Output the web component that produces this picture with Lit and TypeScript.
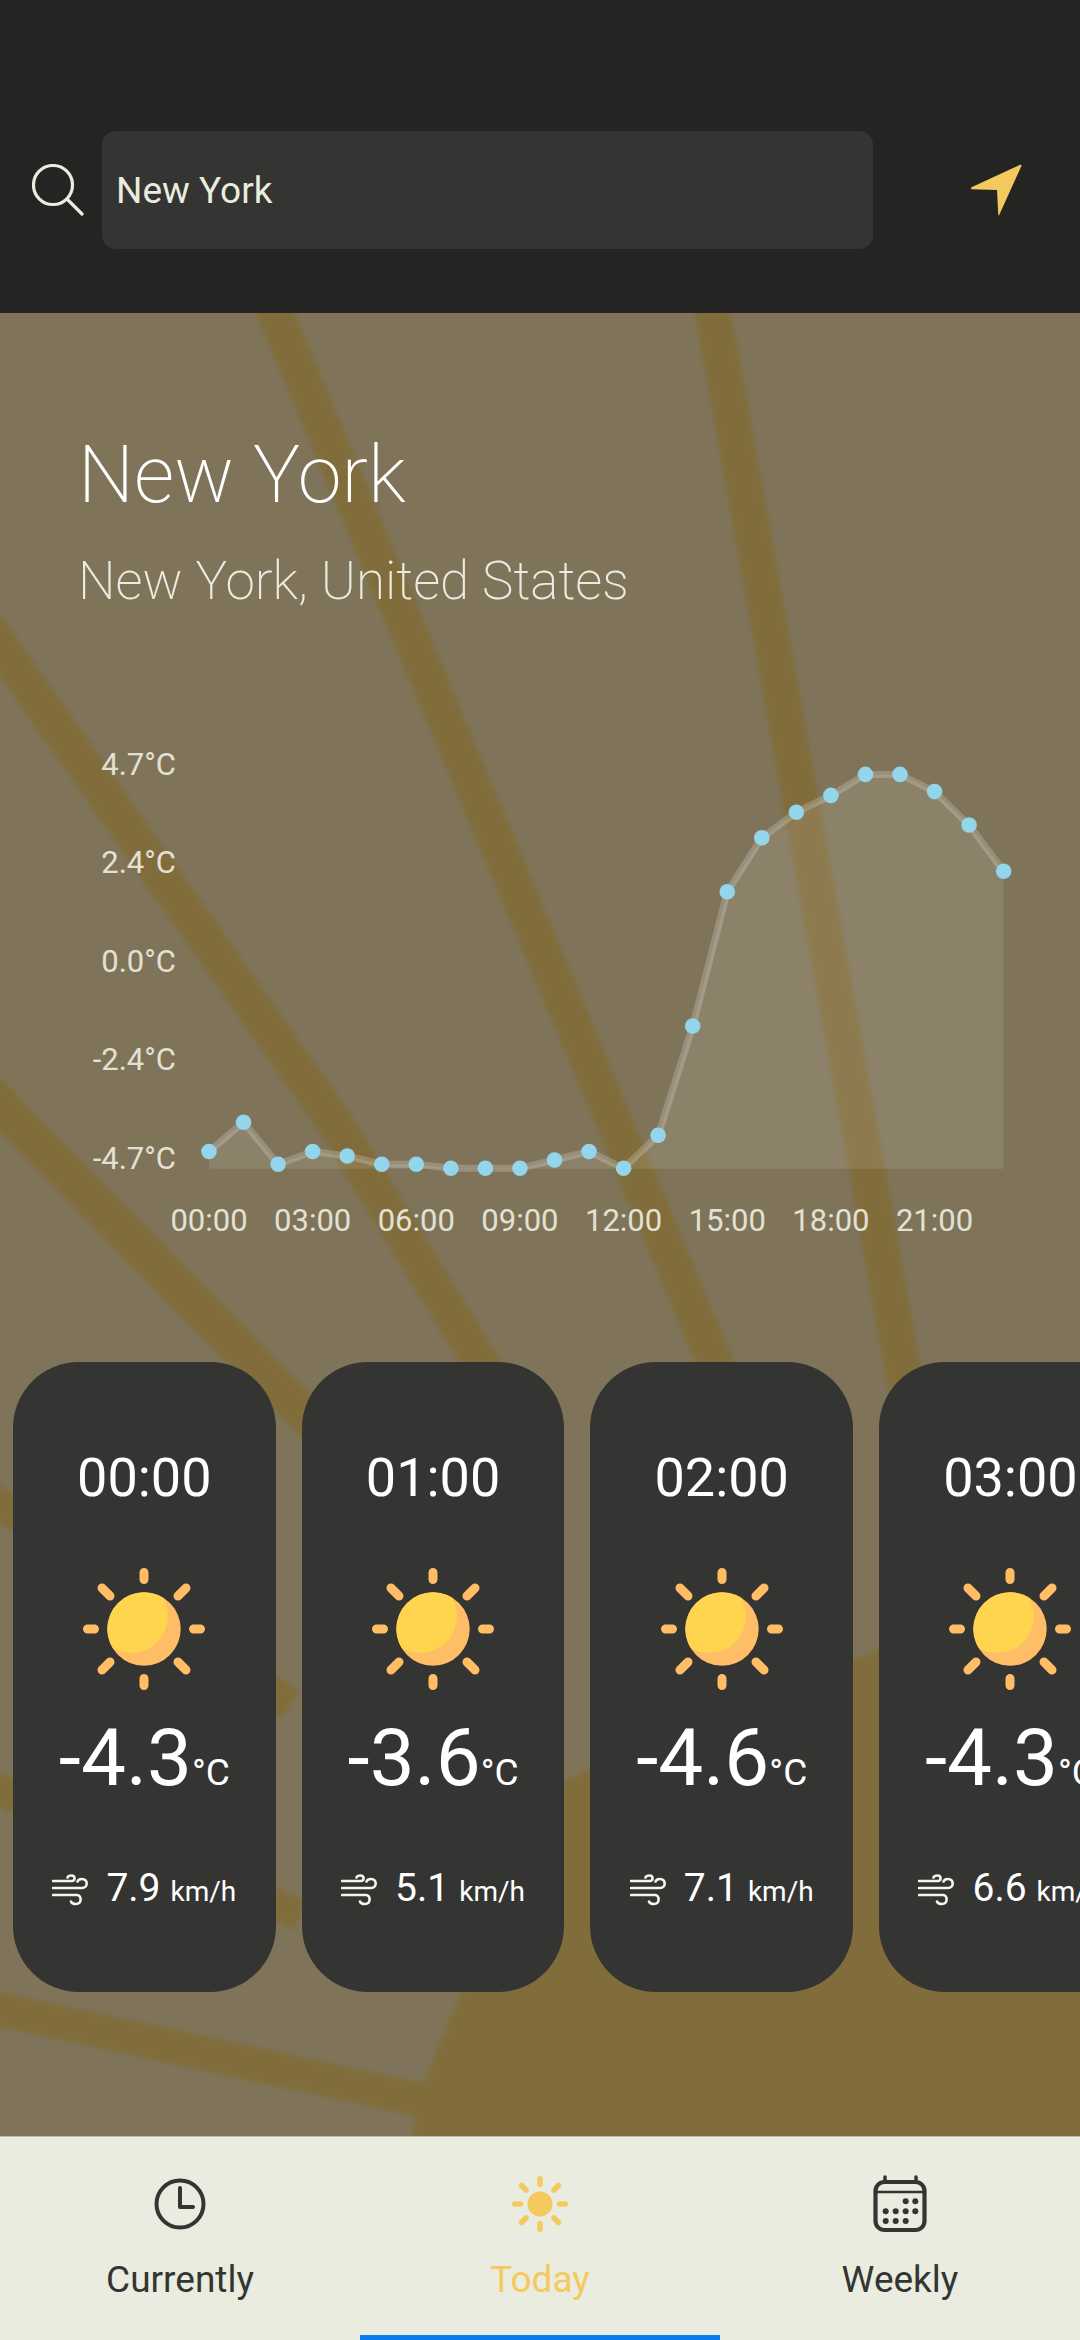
import { LitElement, html, css, svg } from "lit";
import { customElement } from "lit/decorators.js";

const ys = [1151.5,1122.2,1164.2,1151.5,1156,1164.2,1164.2,1168.3,1168.3,1168.3,1160,1151.5,1168.3,1135.3,1026,891.8,837.8,812.3,795.4,774.4,774.4,791.6,825,871.2];
const X0 = 209, STEP = 34.55, BASE = 1168.7;
const pts = ys.map((y, i) => [X0 + i * STEP, y] as const);
const line = pts.map(p => p.join(",")).join(" ");
const area = `${X0},${BASE} ${line} ${pts[23][0]},${BASE}`;
const yLabels: [string, number][] = [["4.7°C",774.7],["2.4°C",873.2],["0.0°C",971.7],["-2.4°C",1069.7],["-4.7°C",1168.7]];
const xLabels = ["00:00","03:00","06:00","09:00","12:00","15:00","18:00","21:00"];
const hours = [
  { t: "00:00", temp: "-4.3", wind: "7.9" },
  { t: "01:00", temp: "-3.6", wind: "5.1" },
  { t: "02:00", temp: "-4.6", wind: "7.1" },
  { t: "03:00", temp: "-4.3", wind: "6.6" },
];

const sun = () => html`<svg class="sun" viewBox="-65 -65 130 130" aria-hidden="true">
  <defs><clipPath id="sunclip"><circle r="36.7"/></clipPath></defs>
  <g stroke="#ffbd66" stroke-width="9" stroke-linecap="round">
    <path d="M0-56.5V-49.5M0 56.5V49.5M-56.5 0H-49.5M56.5 0H49.5M-42-41-34-33M42-41 34-33M-42 41-34 33M42 41 34 33"/>
  </g>
  <circle r="36.7" fill="#ffbd66"/>
  <circle cx="-13" cy="-13" r="37" fill="#ffd54f" clip-path="url(#sunclip)"/>
</svg>`;

const wind = () => html`<svg class="wind" viewBox="0 0 36 32" aria-hidden="true">
  <path d="M1 7H20C23.5 7 23.5 1.5 19.5 1.5C17.5 1.5 16 2.2 15.5 3.5M1 14H30C36 14 36.5 5 30 5C27.5 5 26 6 25.5 7.5M1 21H25C30 21 30 30 24 30C21 30 19.5 29 19 27.5" fill="none" stroke="#f4f5ef" stroke-width="2.6" stroke-linecap="round"/>
</svg>`;

@customElement("app-root")
export class AppRoot extends LitElement {
  static styles = css`
    :host { display: flex; flex-direction: column; width: 1080px; height: 2340px; overflow: hidden; font-family: Roboto, "Liberation Sans", sans-serif; background: #242422; }
    .head { height: 313px; flex: none; display: flex; align-items: flex-start; box-sizing: border-box; padding: 131px 59px 0 32px; background: #242422; }
    .head svg.search { width: 52px; height: 52px; flex: none; margin-right: 18px; margin-top: 33px; }
    .field { flex: none; width: 771px; height: 118px; box-sizing: border-box; background: #343532; border-radius: 14px; display: flex; align-items: center; padding: 0 14px; color: #e9ecdf; font-size: 37px; }
    .head svg.loc { width: 52px; height: 52px; flex: none; margin-left: 97px; margin-top: 33px; }
    main { flex: 1; position: relative; overflow: hidden; background: #7f745a; display: flex; flex-direction: column; }
    .map { position: absolute; inset: 0; width: 100%; height: 100%; }
    .content { position: relative; display: flex; flex-direction: column; padding-top: 115px; }
    .city { margin: 0 0 0 78px; font-size: 79px; line-height: 94px; font-weight: 200; color: #fff; }
    .region { margin: 27px 0 0 78px; font-size: 53px; line-height: 64px; font-weight: 200; color: #ebebe2; }
    .chart { display: block; width: 1080px; height: 560px; margin-top: 107px; }
    .chart text { font-size: 31px; fill: #e3e1d4; font-family: Roboto, "Liberation Sans", sans-serif; }
    .cards { display: flex; gap: 26px; margin-top: 82px; padding-left: 13px; }
    .card { flex: none; width: 262.7px; height: 630px; box-sizing: border-box; padding-top: 86px; border-radius: 66px; background: #343432; color: #fff; display: flex; flex-direction: column; align-items: center; }
    .time { font-size: 54px; line-height: 60px; }
    .sun { width: 130px; height: 130px; margin-top: 56px; flex: none; }
    .temp { margin-top: 19px; font-size: 80px; line-height: 90px; white-space: nowrap; }
    .temp small { font-size: 37px; }
    .windrow { margin-top: 48px; display: flex; align-items: baseline; font-size: 39px; line-height: 44px; white-space: nowrap; }
    .wind { width: 36px; height: 32px; align-self: center; margin-right: 18px; flex: none; }
    .windrow small { font-size: 28px; margin-left: 10px; }
    nav { height: 204px; flex: none; position: relative; box-sizing: border-box; border-top: 1px solid #bdbca9; background: #e9ecdf; display: flex; }
    .tab { flex: 1; display: flex; flex-direction: column; align-items: center; padding-top: 35px; color: #333532; font-size: 37px; line-height: 42px; }
    .tab svg { width: 64px; height: 64px; margin-bottom: 23px; flex: none; }
    .tab.on { color: #f4c95d; }
    .bar { position: absolute; left: 360px; bottom: 0; width: 360px; height: 5px; background: #0a7bef; }
  `;

  render() {
    return html`
      <header class="head">
        <svg class="search" viewBox="0 0 52 52" aria-hidden="true">
          <circle cx="21" cy="21" r="19.5" fill="none" stroke="#e9ecdf" stroke-width="3.2"/>
          <path d="M36 36 50 50" stroke="#e9ecdf" stroke-width="3.2" stroke-linecap="round"/>
        </svg>
        <div class="field">New York</div>
        <svg class="loc" viewBox="0 0 52 52" aria-hidden="true">
          <path d="M50.2 0.8 1.5 23.2C0.6 24 1 25.2 2 25.3L27 26 28.3 51C28.5 51.5 29 51.5 29.2 51L51.4 2C51.7 1 51 0.4 50.2 0.8Z" fill="#f4c95d"/>
        </svg>
      </header>
      <main>
        <svg class="map" viewBox="0 313 1080 1823" preserveAspectRatio="none" aria-hidden="true">
          <defs><filter id="soft" x="-5%" y="-5%" width="110%" height="110%"><feGaussianBlur stdDeviation="2.2"/></filter></defs>
          <g filter="url(#soft)" fill="none" stroke="#806d3a" stroke-width="36">
            <polyline points="268,296 716,1365 770,1495"/>
            <polyline points="710,296 902,1365 945,1600"/>
            <polyline points="-20,617 335,1123 482,1365 530,1440"/>
            <polyline stroke-width="38" points="-20,1084 255,1365 330,1440"/>
            <polyline stroke-width="32" points="-20,1490 290,1705"/>
            <polyline stroke-width="32" points="-20,1782 300,1915"/>
            <polyline stroke-width="34" points="-20,2005 430,2102"/>
            <polygon fill="#806d3a" stroke="none" points="412,2150 414,2117 424,2082 461,1992 565,1780 900,1640 1100,1620 1100,2150"/>
          </g>
        </svg>
        <div class="content">
          <h1 class="city">New York</h1>
          <p class="region">New York, United States</p>
          <svg class="chart" viewBox="0 720 1080 560" role="img" aria-label="Temperature today">
            <polygon points=${area} fill="#fff" fill-opacity="0.1"/>
            <polyline points=${line} fill="none" stroke="#fff" stroke-opacity="0.2" stroke-width="7"/>
            ${pts.map(p => svg`<circle cx=${p[0]} cy=${p[1]} r="7.8" fill="#93d5ea"/>`)}
            ${yLabels.map(l => svg`<text x="176" y=${l[1]} text-anchor="end">${l[0]}</text>`)}
            ${xLabels.map((l, i) => svg`<text x=${X0 + i * 3 * STEP} y="1231.4" text-anchor="middle">${l}</text>`)}
          </svg>
          <div class="cards">
            ${hours.map(h => html`<article class="card">
              <div class="time">${h.t}</div>
              ${sun()}
              <div class="temp">${h.temp}<small>°C</small></div>
              <div class="windrow">${wind()}<span>${h.wind}</span><small>km/h</small></div>
            </article>`)}
          </div>
        </div>
      </main>
      <nav>
        <div class="tab">
          <svg viewBox="-32 -32 64 64" aria-hidden="true">
            <circle r="23.5" fill="none" stroke="#333532" stroke-width="4"/>
            <path d="M0-16V3H13" fill="none" stroke="#333532" stroke-width="4" stroke-linecap="round" stroke-linejoin="round"/>
          </svg>
          Currently
        </div>
        <div class="tab on">
          <svg viewBox="-32 -32 64 64" aria-hidden="true">
            <circle r="12.5" fill="#f4c95d"/>
            <path d="M0-25.3V-19.7M0 25.3V19.7M-25.3 0H-19.7M25.3 0H19.7M-18.5-18.5-14-14M18.5-18.5 14-14M-18.5 18.5-14 14M18.5 18.5 14 14" stroke="#f4c95d" stroke-width="5.5" stroke-linecap="round"/>
          </svg>
          Today
        </div>
        <div class="tab">
          <svg viewBox="-32 -32 64 64" aria-hidden="true">
            <rect x="-24.5" y="-22" width="49" height="48" rx="9" fill="none" stroke="#333532" stroke-width="4.2"/>
            <path d="M-24-12H24" stroke="#333532" stroke-width="2.6"/>
            <path d="M-15-27V-22M16-27V-22" stroke="#333532" stroke-width="3.5" stroke-linecap="round"/>
            <g fill="#333532">
              ${[[5.7,-2.7],[15.3,-2.7],[-14.3,7.3],[-4.3,7.3],[5.7,7.3],[15.3,7.3],[-14.3,17],[-4.3,17],[5.7,17]].map(d => svg`<circle cx=${d[0]} cy=${d[1]} r="3"/>`)}
            </g>
          </svg>
          Weekly
        </div>
        <div class="bar"></div>
      </nav>
    `;
  }
}
